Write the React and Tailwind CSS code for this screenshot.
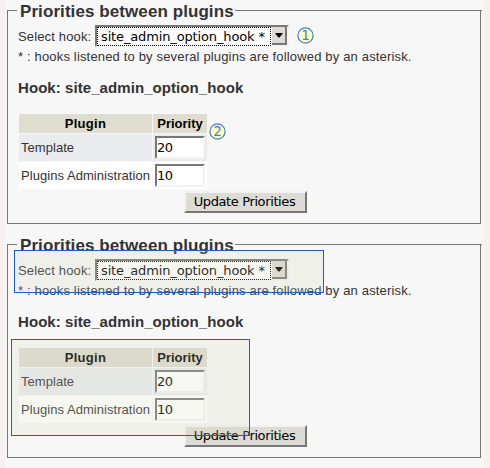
import React from 'react';

const SANS = "font-['Liberation_Sans',Arial,sans-serif]";
const UI = "font-['DejaVu_Sans',Verdana,sans-serif]";

function Marker({ n, className }) {
  return (
    <svg className={`absolute ${className}`} width="17" height="17" viewBox="0 0 17 17">
      <circle cx="8.5" cy="8.5" r="7.6" fill="#ffffc8" stroke="#4a7fc8" strokeWidth="1.2" />
      <text x="8.5" y="13.4" textAnchor="middle" fontSize="13.5" fill="#4a7cc4" fontFamily="DejaVu Sans, sans-serif">{n}</text>
    </svg>
  );
}

function PriorityRow({ name, value, shade }) {
  return (
    <div className="flex h-[27px] gap-px">
      <div className={`flex w-[133px] items-center pl-[2px] ${shade}`}>
        <span className="text-[13px] leading-none tracking-[0.05px] whitespace-nowrap">{name}</span>
      </div>
      <div className={`w-[54px] pt-[2px] pl-[2px] ${shade}`}>
        <div className={`${UI} flex h-[23px] w-[50px] items-center border-2 border-t-[#777] border-l-[#777] border-r-[#f2f2f0] border-b-[#f2f2f0] bg-white text-[13px] leading-none tracking-[-0.5px] text-black`}>
          {value}
        </div>
      </div>
    </div>
  );
}

function Panel() {
  return (
    <section className="h-[234px] pr-[7px] pl-[7px]">
      <div className="flex h-[21px] items-center">
        <div className="h-px w-[10px] bg-[#777]" />
        <h2 className="w-[218px] pt-[2px] pl-[3px] text-[17px] leading-[21px] font-bold tracking-[0.08px] whitespace-nowrap">Priorities between plugins</h2>
        <div className="h-px grow bg-[#777]" />
      </div>
      <div className="-mt-[10px] mr-px h-[213px] border border-t-0 border-[#777] pt-[14px] pl-[10px]">
        <div className="flex h-[22px] items-center">
          <span className="w-[77px] text-[13px] leading-none tracking-[0.15px] whitespace-nowrap">Select hook:</span>
          <div className="flex h-[22px] w-[194px] border-2 border-t-[#777] border-l-[#777] border-r-[#f4f4f2] border-b-[#f4f4f2] bg-white">
            <div className={`${UI} flex h-[19px] w-[174px] shrink-0 items-center border border-dotted border-black pl-[3px] text-[13px] leading-none tracking-[-0.14px] whitespace-nowrap text-black`}>
              site_admin_option_hook *
            </div>
            <div className="ml-px flex h-[18px] w-[15px] shrink-0 items-center justify-center border-r-2 border-b-2 border-[#777] bg-[#dcdbd5]">
              <svg width="8" height="5" viewBox="0 0 8 5"><path d="M.5 0h7v1L4.5 4.5h-1L.5 1z" fill="#000" /></svg>
            </div>
          </div>
        </div>
        <p className="mt-[2px] h-[15px] text-[13px] leading-[15px] tracking-[0.165px] whitespace-nowrap">* : hooks listened to by several plugins are followed by an asterisk.</p>
        <h3 className="mt-[15px] h-[18px] text-[15px] leading-[18px] font-bold tracking-[0.07px] whitespace-nowrap">Hook: site_admin_option_hook</h3>
        <div className="mt-[17px] ml-px flex w-[188px] flex-col gap-px">
          <div className="flex h-[19px] gap-px text-[13px] leading-[19px] font-bold text-black">
            <div className="w-[133px] bg-[#dfddd0] text-center tracking-[0.3px]">Plugin</div>
            <div className="w-[54px] bg-[#dfddd0] text-center">Priority</div>
          </div>
          <PriorityRow name="Template" value="20" shade="bg-[#eaebef]" />
          <PriorityRow name="Plugins Administration" value="10" shade="bg-white" />
        </div>
        <button className={`${UI} mt-[2px] ml-[166px] block h-[22px] w-[123px] border-2 border-t-[#f2f2f0] border-l-[#f2f2f0] border-r-[#777] border-b-[#777] bg-[#dcdbd5] pr-[2px] text-[13px] leading-[18px] tracking-[-0.38px] whitespace-nowrap text-black`}>
          Update Priorities
        </button>
      </div>
    </section>
  );
}

export default function App() {
  return (
    <div className={`${SANS} h-[468px] w-[490px] overflow-hidden text-[#333]`}>
      <main className="relative h-[468px] w-[490px] border-r-[6px] border-l-[5px] border-[#f6f1ee] bg-[#f7f7f7]">
        <div className="-mx-[5px]">
          <Panel />
          <Panel />
        </div>
        <Marker n="1" className="top-[27px] left-[292px]" />
        <Marker n="2" className="top-[123px] left-[204px]" />
        <div className="absolute top-[250px] left-[9px] h-[43px] w-[310px] border border-[#1d5ccc] bg-[rgba(210,215,185,0.2)]" />
        <div className="absolute top-[339px] left-[6px] h-[97px] w-[239px] border border-[#1d5ccc] bg-[rgba(210,215,185,0.2)]" />
      </main>
    </div>
  );
}
